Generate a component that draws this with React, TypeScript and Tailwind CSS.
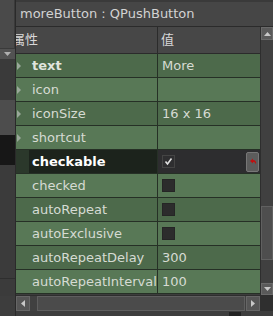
import React from "react";

type Row = { name: string; value?: string; check?: boolean; checked?: boolean; expand?: boolean; bold?: boolean };

const rows: Row[] = [
  { name: "text", value: "More", expand: true, bold: true },
  { name: "icon", expand: true },
  { name: "iconSize", value: "16 x 16", expand: true },
  { name: "shortcut", expand: true },
  { name: "checkable", check: true, checked: true },
  { name: "checked", check: true },
  { name: "autoRepeat", check: true },
  { name: "autoExclusive", check: true },
  { name: "autoRepeatDelay", value: "300" },
  { name: "autoRepeatInterval", value: "100" },
];

const font = { fontFamily: '"DejaVu Sans", "Noto Sans CJK SC", sans-serif' };

function Arrow() {
  return (
    <svg width="5" height="8" viewBox="0 0 5 8" className="absolute left-[1px] top-[8px]">
      <path d="M0 0 L4 4 L0 8 Z" fill="#9aa89a" />
    </svg>
  );
}

function Box({ checked, sel }: { checked?: boolean; sel?: boolean }) {
  return (
    <div
      className={`w-[13px] h-[13px] border flex items-center justify-center ${
        sel ? "bg-[#2e2e30] border-[#444]" : "bg-[#2c2c2c] border-[#252525]"
      }`}
    >
      {checked && (
        <svg width="9" height="9" viewBox="0 0 9 9">
          <path d="M1.5 4.5 L3.5 7 L7.5 1.5" stroke="#e0e0e0" strokeWidth="1.6" fill="none" />
        </svg>
      )}
    </div>
  );
}

export default function App() {
  return (
    <div className="w-[273px] h-[316px] bg-[#3c3c3c] flex overflow-hidden text-[13px]" style={font}>
      {/* left strip */}
      <div className="w-[16px] flex flex-col border-r border-[#2a2a2a]">
        <div className="h-[48px] bg-[#4a4a4a] border-r border-[#3a3a3a]" />
        <div className="h-[12px] bg-[#525252] flex items-center justify-center border-y border-[#3a3a3a]">
          <svg width="7" height="4" viewBox="0 0 7 4">
            <path d="M0 0 L7 0 L3.5 4 Z" fill="#b0b0b0" />
          </svg>
        </div>
        <div className="h-[40px] bg-[#3a3a3a]" />
        <div className="h-[35px] bg-[#4d4d4d]" />
        <div className="h-[30px] bg-[#171717]" />
        <div className="h-[114px] bg-[#3b3b3b] border-b border-[#2e2e2e]" />
        <div className="h-[17px] bg-[#3b3b3b]" />
        <div className="flex-1 bg-[#3d3d3d]" />
      </div>

      {/* main */}
      <div className="w-[257px] flex flex-col">
        <div className="h-[27px] bg-[#464646] border-t-[2px] border-t-[#3a3a3a] border-b border-b-[#2b2b2b] flex items-center pl-[4px] text-[#d2d2d2]">
          moreButton : QPushButton
        </div>
        <div className="flex h-[268px]">
          <div className="w-[244px] flex flex-col">
            <div className="h-[27px] bg-[#474747] border-b border-[#2b2b2b] flex text-[#d8d8d8]">
              <div className="w-[142px] border-r border-[#2b2b2b] flex items-center overflow-hidden">
                <span className="-ml-[4px]">属性</span>
              </div>
              <div className="flex-1 flex items-center pl-[3px]">值</div>
            </div>
            {rows.map((r, i) => {
              const sel = r.name === "checkable";
              const bg = i % 2 === 0 ? "bg-[#4d6a4b]" : "bg-[#587856]";
              return (
                <div key={r.name} className="h-[24px] flex border-b border-[#263026]">
                  <div
                    className={`relative w-[142px] border-r border-[#263026] flex ${sel ? "bg-[#2b382b]" : bg}`}
                  >
                    {r.expand && <Arrow />}
                    <div
                      className={`ml-[13px] flex-1 flex items-center pl-[3px] ${
                        sel ? "bg-[#1c231c] text-white font-bold" : r.bold ? "text-[#e0e4de] font-bold" : "text-[#d6dbd3]"
                      }`}
                    >
                      {r.name}
                    </div>
                  </div>
                  <div
                    className={`flex-1 flex items-center pl-[4px] ${sel ? "bg-[#2d2d2f]" : bg} text-[#d6dbd3]`}
                  >
                    {r.check && <Box checked={r.checked} sel={sel} />}
                    {r.value}
                    {sel && (
                      <div className="ml-auto mr-[1px] w-[13px] h-[20px] rounded-[2px] bg-[#5c5c5c] border border-[#777] flex items-center justify-center">
                        <svg width="8" height="8" viewBox="0 0 8 8">
                          <path d="M1 3 L4 0.5 L4 2 C6.5 2 7.5 3.5 7 6.5 C6.3 4.5 5.5 4 4 4 L4 5.5 Z" fill="#c01010" />
                        </svg>
                      </div>
                    )}
                  </div>
                </div>
              );
            })}
          </div>
          {/* vertical scrollbar */}
          <div className="w-[13px] bg-[#404040] border-l border-[#2e2e2e] flex flex-col">
            <div className="h-[13px] bg-[#5a5a5a] border border-[#6a6a6a] flex items-center justify-center">
              <svg width="7" height="4" viewBox="0 0 7 4">
                <path d="M0 4 L7 4 L3.5 0 Z" fill="#c8c8c8" />
              </svg>
            </div>
            <div className="h-[166px]" />
            <div className="h-[54px] bg-[#4e4e4e] border border-[#606060]" />
            <div className="flex-1" />
            <div className="h-[12px] bg-[#5a5a5a] border border-[#6a6a6a] flex items-center justify-center">
              <svg width="7" height="4" viewBox="0 0 7 4">
                <path d="M0 0 L7 0 L3.5 4 Z" fill="#c8c8c8" />
              </svg>
            </div>
          </div>
        </div>
        {/* horizontal scrollbar */}
        <div className="h-[16px] flex bg-[#404040] border-t border-[#2e2e2e]">
          <div className="w-[14px] bg-[#555] border border-[#666] flex items-center justify-center">
            <svg width="4" height="7" viewBox="0 0 4 7">
              <path d="M4 0 L4 7 L0 3.5 Z" fill="#c8c8c8" />
            </svg>
          </div>
          <div className="w-[7px]" />
          <div className="w-[208px] bg-[#4b4b4b] border border-[#5e5e5e]" />
          <div className="w-[1px]" />
          <div className="w-[14px] bg-[#555] border border-[#666] flex items-center justify-center">
            <svg width="4" height="7" viewBox="0 0 4 7">
              <path d="M0 0 L0 7 L4 3.5 Z" fill="#c8c8c8" />
            </svg>
          </div>
          <div className="flex-1 bg-[#2f2f2f]" />
        </div>
        <div className="flex-1 bg-[#3d3d3d] relative">
          <div className="absolute left-[213px] top-[1px] w-[12px] h-[4px] bg-[#222]" />
        </div>
      </div>
    </div>
  );
}
